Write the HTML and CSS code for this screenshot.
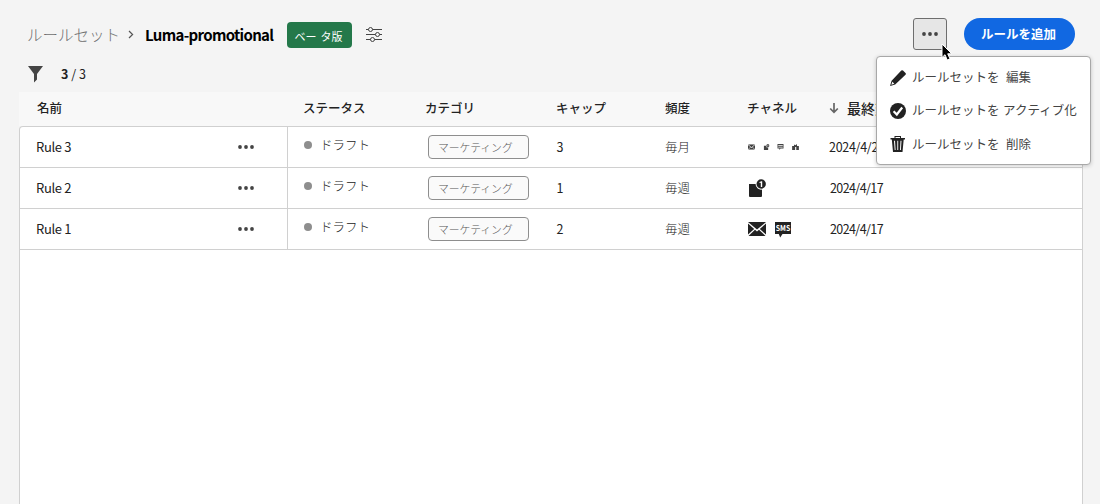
FILE: index.html
```html
<!DOCTYPE html>
<html lang="ja">
<head>
<meta charset="utf-8">
<title>Luma-promotional</title>
<link rel="stylesheet" href="styles.css">
</head>
<body>
<svg class="defs" width="0" height="0">
  <symbol id="dots" viewBox="0 0 16 4"><circle cx="2" cy="2" r="1.900"/><circle cx="8" cy="2" r="1.900"/><circle cx="14" cy="2" r="1.900"/></symbol>
  <symbol id="mail" viewBox="0 0 18 14"><path d="M0 0H18L9 7.6zM0 1.6 6.2 7 0 12.6zM18 1.6 11.8 7 18 12.6zM7 7.7 9 9.4 11 7.7 17.5 14H.5z"/></symbol>
  <symbol id="push" viewBox="0 0 18 18"><path d="M1 5h6.6A5.5 5.5 0 0 0 14 10.6V17a1 1 0 0 1-1 1H2a1 1 0 0 1-1-1z"/><circle cx="13.2" cy="5" r="4.7"/><path class="knock" d="M12.8 8V3.8l-1.3.3v-1l1.9-.8h.8V8z"/></symbol>
  <symbol id="sms" viewBox="0 0 16 16"><path d="M0 0H16V12H7.5L5.2 15.5 3.8 12H0z"/></symbol>
</svg>
<header class="topbar">
  <span class="crumb">ルールセット</span>
  <svg class="chevron" viewBox="0 0 6 8"><path d="M1 .5 4.6 4 1 7.5"/></svg>
  <h1 class="title">Luma-promotional</h1>
  <span class="badge"><span>ベー</span><span>タ版</span></span>
  <svg class="sliders" viewBox="0 0 16 16"><path d="M0 2.5H2.5M6.5 2.5H16M0 7.5H9.5M13.5 7.5H16M0 12.5H4.5M8.500 12.5H16"/><circle cx="4.5" cy="2.5" r="2"/><circle cx="11.5" cy="7.5" r="2"/><circle cx="6.500" cy="12.5" r="2"/></svg>
  <button class="more"><svg class="dots"><use href="#dots"/></svg></button>
  <button class="primary">ルールを追加</button>
</header>
<div class="filterbar">
  <svg class="funnel" viewBox="0 0 15 17"><path d="M0 0H15L9 8V13.500L6 16.500V8z"/></svg>
  <span class="count"><b>3</b> / 3</span>
</div>
<main class="table">
  <div class="row head">
    <div class="cell">名前</div><div class="cell status-head">ステータス</div><div class="cell">カテゴリ</div><div class="cell">キャップ</div><div class="cell">頻度</div><div class="cell">チャネル</div>
    <div class="cell sorted"><svg class="arrow" viewBox="0 0 10 11"><path d="M5 0V9M1.200 5.500 5 9.300 8.800 5.500"/></svg>最終変更日</div>
  </div>
  <div class="body">
    <div class="row">
      <div class="cell name">Rule 3<svg class="dots"><use href="#dots"/></svg></div>
      <div class="cell status"><i class="dot"></i>ドラフト</div>
      <div class="cell tagcell"><span class="tag">マーケティング</span></div>
      <div class="cell cap">3</div><div class="cell freq">毎月</div>
      <div class="cell tiny"><svg viewBox="0 0 18 14"><use href="#mail"/></svg><svg viewBox="0 0 18 18"><use href="#push"/></svg><svg viewBox="0 0 16 16"><path d="M0 0H16V12H8L5 16V12H0zM2 3V5H14V3zM2 7V9H14V7z" fill-rule="evenodd"/></svg><svg viewBox="0 0 18 16"><path d="M0 5H5V1L9 3 13 0V5H18V16H11V8H8V16H0z"/></svg></div>
      <div class="cell date first">2024/4/23</div>
    </div>
    <div class="row">
      <div class="cell name">Rule 2<svg class="dots"><use href="#dots"/></svg></div>
      <div class="cell status"><i class="dot"></i>ドラフト</div>
      <div class="cell tagcell"><span class="tag">マーケティング</span></div>
      <div class="cell cap">1</div><div class="cell freq">毎週</div>
      <div class="cell channels"><svg class="push"><use href="#push"/></svg></div>
      <div class="cell date">2024/4/17</div>
    </div>
    <div class="row">
      <div class="cell name">Rule 1<svg class="dots"><use href="#dots"/></svg></div>
      <div class="cell status"><i class="dot"></i>ドラフト</div>
      <div class="cell tagcell"><span class="tag">マーケティング</span></div>
      <div class="cell cap">2</div><div class="cell freq">毎週</div>
      <div class="cell channels"><svg class="mail"><use href="#mail"/></svg><svg class="sms" viewBox="0 0 16 16"><use href="#sms"/><text x="8" y="8.500" textLength="14.500" lengthAdjust="spacingAndGlyphs">SMS</text></svg></div>
      <div class="cell date">2024/4/17</div>
    </div>
  </div>
</main>
<nav class="menu">
  <div class="item"><svg viewBox="0 0 16 16"><path d="M11.300.6a1.200 1.200 0 0 1 1.700 0L15.500 3a1.200 1.200 0 0 1 0 1.700L5.200 14.400 0 16 1.600 10.700zM2.400 11.700 1.300 14.700 4.300 13.700z" fill-rule="evenodd"/></svg><span class="label">ルールセットを</span><span class="verb">編集</span></div>
  <div class="item second"><svg viewBox="0 0 16 16"><circle cx="8" cy="8" r="8"/><path class="check" d="M3.600 8.300 6.800 11.500 12.200 4.500"/></svg><span class="label">ルールセットを</span><span class="verb activate">アクティブ化</span></div>
  <div class="item third"><svg viewBox="0 0 16 16"><path d="M4.500 2V0H11V2H15V3.500H13.700L12.500 16H3L1.800 3.500H.5V2zM5.500 1V2H10V1zM4 4.800 4.700 14H5.600L5 4.800zM7.300 4.800V14H8.200V4.800zM10.500 4.800 10 14H10.900L11.500 4.800z" fill-rule="evenodd"/></svg><span class="label">ルールセットを</span><span class="verb">削除</span></div>
</nav>
<svg class="cursor" viewBox="0 0 12 19"><path d="M1 1V14.500L4 11.700 6.200 17 9 15.800 6.700 10.800H10.800z"/></svg>
</body>
</html>
```

FILE: styles.css
```css
* { box-sizing: border-box; }
body {
  margin: 0;
  height: 504px;
  overflow: hidden;
  display: flex;
  flex-direction: column;
  background: #f4f4f4;
  color: #222;
  font: 13px/20px "Noto Sans CJK JP", sans-serif;
  white-space: nowrap;
}
.defs { position: absolute; }
svg { flex: none; fill: #222; }
.topbar {
  height: 64px;
  padding: 5px 25px 0 27px;
  display: flex;
  align-items: center;
}
.crumb { width: 101px; font-size: 15.500px; font-weight: 300; color: #6e6e6e; margin-top: -1px; }
.chevron { width: 6px; height: 9px; fill: none; stroke: #555; stroke-width: 1.200; margin-right: 11px; }
.title { width: 142px; margin: 0; font-size: 15px; font-weight: 700; letter-spacing: -.68px; color: #000; }
.badge {
  width: 65px;
  height: 26px;
  display: flex;
  align-items: center;
  justify-content: center;
  gap: 4px;
  padding: 2px 2px 0 0;
  border-radius: 4px;
  background: #24784a;
  color: #fff;
  font-size: 11px;
}
.sliders { width: 16px; height: 16px; margin-left: 14px; fill: none; stroke: #444; }
.more {
  width: 34px;
  height: 32px;
  margin: -2px 17px 0 auto;
  padding: 0;
  display: flex;
  align-items: center;
  justify-content: center;
  border: 1px solid #6e6e6e;
  border-radius: 3px;
  background: #e6e6e6;
}
.dots { width: 16px; height: 4px; fill: #444; }
.dots use { fill: #444; }
.primary {
  width: 111px;
  height: 32px;
  margin-top: -2px;
  padding: 0 2px 0 0;
  border: 0;
  border-radius: 16px;
  background: #1168e2;
  color: #fff;
  font: bold 12.500px/20px "Noto Sans CJK JP", sans-serif;
}
.filterbar { height: 28px; padding: 0 0 8px 28px; display: flex; align-items: center; }
.funnel { width: 15px; height: 17px; fill: #444; }
.count { margin-left: 18px; font-size: 12.500px; }
.table { flex: 1; display: flex; flex-direction: column; width: 1064px; margin-left: 19px; }
.row {
  height: 41px;
  display: grid;
  grid-template-columns: 268px 122px 131px 108px 83px 82px 1fr;
  border-bottom: 1px solid #d0d0d0;
}
.cell { display: flex; align-items: center; padding-left: 16px; }
.head { height: 34px; padding-left: 1px; border: 0; background: #f8f8f8; font-size: 12.500px; font-weight: 500; padding-bottom: 2px; }
.head .cell:first-child { padding-left: 17px; }
.head .status-head { padding-left: 15px; }
.head .cell:nth-child(3), .head .cell:nth-child(4) { padding-left: 15px; }
.head .cell:nth-child(6) { padding-left: 15px; }
.head .sorted { padding-left: 15px; font-size: 14px; line-height: 18px; }
.arrow { width: 10px; height: 11px; margin-right: 8px; fill: none; stroke: #666; stroke-width: 1.700; }
.body { flex: 1; border: 1px solid #d0d0d0; border-bottom: 0; border-radius: 4px 4px 0 0; background: #fff; }
.name { justify-content: space-between; padding-right: 33px; border-right: 1px solid #d0d0d0; letter-spacing: -.35px; }
.status { align-items: flex-start; padding-top: 8px; font-weight: 300; font-size: 12.500px; }
.dot { width: 8px; height: 8px; margin: 6px 8px 0 0; border-radius: 50%; background: #8e8e8e; }
.tagcell { padding-left: 18px; }
.tag {
  width: 101px;
  height: 24px;
  padding: 1px 0 0 9px;
  border: 1px solid #8e8e8e;
  border-radius: 4px;
  background: #fafafa;
  color: #555;
  font-size: 10.800px;
  font-weight: 300;
}
.cap { padding-left: 15.500px; font-size: 12.500px; }
.freq { font-size: 12.500px; font-weight: 300; }
.tiny { gap: 7.600px; }
.tiny svg { width: 7px; height: 6px; opacity: .85; }
.channels { gap: 9px; }
.mail { width: 18px; height: 14px; }
.push { width: 18px; height: 18px; }
.sms { width: 16px; height: 16px; margin-top: 1px; }
.sms text { fill: #fff; font: bold 7.500px "Noto Sans CJK JP", sans-serif; text-anchor: middle; }
.knock { fill: #fff; }
.date { font-size: 12.500px; letter-spacing: -.6px; }
.date.first { padding-left: 15px; letter-spacing: -.3px; }
.menu {
  position: absolute;
  left: 876px;
  top: 56px;
  width: 215px;
  height: 109px;
  padding: 4px 12px 0 13px;
  border: 1px solid #a8a8a8;
  border-radius: 4px;
  background: #fff;
  box-shadow: 0 1px 4px rgba(0,0,0,.2);
  color: #444;
  font-size: 12.500px;
}
.item { height: 33px; display: flex; align-items: center; }
.item span { margin-top: -2px; }
.item.third span { margin-top: 1px; }
.item svg { width: 16px; height: 16px; margin-right: 6px; }
.label { width: 94px; }
.verb { font-size: 12.500px; }
.activate { margin-left: -3px; }
.check { fill: none; stroke: #fff; stroke-width: 2.200; }
.cursor { position: absolute; left: 941px; top: 43px; width: 12px; height: 19px; fill: #000; stroke: #fff; }
```
